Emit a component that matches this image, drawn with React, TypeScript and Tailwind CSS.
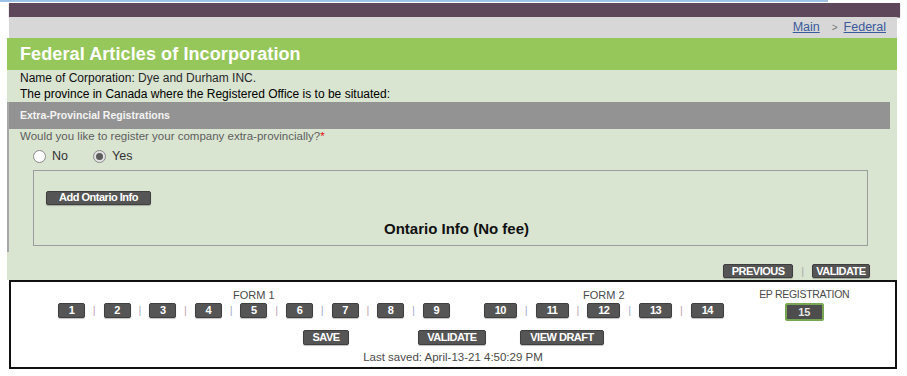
import React from 'react';

type BtnProps = {
  children: React.ReactNode;
  className?: string;
};

const Btn: React.FC<BtnProps> = ({ children, className = '' }) => (
  <span
    className={`inline-flex items-center justify-center rounded-[2px] border border-[#3f3f3f] bg-[#555555] font-bold leading-none tracking-[-0.5px] text-white shadow-[0_1px_1px_rgba(0,0,0,0.25)] ${className}`}
  >
    {children}
  </span>
);

const Sep: React.FC<{ w: string; tone: string }> = ({ w, tone }) => (
  <span className={`flex h-[15px] items-center justify-center text-[11px] leading-none ${w} ${tone}`}>|</span>
);

const form1 = ['1', '2', '3', '4', '5', '6', '7', '8', '9'];
const form2 = ['10', '11', '12', '13', '14'];

const Radio: React.FC<{ checked?: boolean }> = ({ checked }) => (
  <span
    className={`flex h-[13px] w-[13px] items-center justify-center rounded-full border border-[#8a8a8a] ${
      checked ? 'bg-[#e2e2e2]' : 'bg-white'
    }`}
  >
    {checked && <span className="h-[7px] w-[7px] rounded-full bg-[#5c5c5c]" />}
  </span>
);

export default function App() {
  return (
    <div className="relative h-[376px] w-[907px] overflow-hidden bg-white font-['Liberation_Sans',Arial,sans-serif]">
      {/* top strip */}
      <div className="h-[2px] w-[828px] bg-[#9cc3e6]" />
      <div className="h-[1px]" />
      <div className="ml-[9px] h-[14px] w-[891px] bg-[#5e465b] shadow-[0_1px_1px_rgba(0,0,0,0.4)]" />

      {/* breadcrumb */}
      <div className="ml-[9px] flex h-[21px] w-[888px] items-center justify-end bg-[#d7d7d7] pr-[11px] text-[12.5px]">
        <a className="text-[#3a5a9c] underline">Main</a>
        <span className="ml-[12px] mr-[6px] text-[10px] text-[#777]">&gt;</span>
        <a className="text-[#3a5a9c] underline">Federal</a>
      </div>

      {/* header */}
      <div className="ml-[7px] flex h-[32px] w-[890px] items-center bg-[#96c75a] pl-[13px] text-[18px] font-bold tracking-[0.1px] text-white">
        Federal Articles of Incorporation
      </div>

      {/* content panel */}
      <div className="ml-[7px] h-[210px] w-[890px] bg-[#d9e4d1]">
        <div className="pl-[13px] text-[12px] leading-[16px] text-[#111]">
          <div>Name of Corporation: <span className="text-[#2a2a2a]">Dye and Durham INC.</span></div>
          <div className="text-black">The province in Canada where the Registered Office is to be situated:</div>
        </div>

        <div className="h-[150px] border-l-2 border-[#a9a6a9]">
          <div className="flex h-[27px] w-[881px] items-center bg-[#939393] pl-[11px] text-[10.5px] font-bold text-[#f4f4f4]">
            Extra-Provincial Registrations
          </div>
          <div className="pl-[11px] text-[11.5px] leading-[14px] text-[#5e5e5e]">
            Would you like to register your company extra-provincially?<span className="text-[#e01010]">*</span>
          </div>
          <div className="flex h-[27px] items-center pl-[24px] text-[12.5px] text-[#333]">
            <Radio />
            <span className="ml-[6px]">No</span>
            <span className="ml-[25px]">
              <Radio checked />
            </span>
            <span className="ml-[6px]">Yes</span>
          </div>
          <div className="ml-[24px] h-[76px] w-[835px] border border-[#9c9c9c] pl-[12px] pt-[13px]">
            <Btn className="h-[14px] w-[105px] text-[11px]">Add Ontario Info</Btn>
            <div className="mt-[11px] text-center text-[15px] font-bold leading-[20px] text-[#111]">
              Ontario Info (No fee)
            </div>
          </div>
        </div>

        <div className="mt-[12px] flex items-center justify-end pr-[27px]">
          <Btn className="h-[14px] w-[70px] text-[11px]">PREVIOUS</Btn>
          <span className="mx-[8px] text-[11px] leading-none text-[#aaa]">|</span>
          <Btn className="h-[14px] w-[58px] text-[11px]">VALIDATE</Btn>
        </div>
      </div>

      {/* navigation box */}
      <div className="ml-[9px] h-[89px] w-[888px] border-2 border-[#111] bg-white pt-[6px]">
        <div className="flex h-[33px] items-start">
          <div className="ml-[47px] flex flex-col items-center">
            <div className="h-[15px] text-[11px] leading-[15px] text-[#4a4a4a]">FORM 1</div>
            <div className="flex">
              {form1.map((n, i) => (
                <React.Fragment key={n}>
                  {i > 0 && <Sep w="w-[18.6px]" tone={i % 2 ? 'text-[#c7a3b6]' : 'text-[#a5abc9]'} />}
                  <Btn className="h-[15px] w-[27px] text-[11px] text-[#e6e6e6]">{n}</Btn>
                </React.Fragment>
              ))}
            </div>
          </div>
          <div className="ml-[34px] flex flex-col items-center">
            <div className="h-[15px] text-[11px] leading-[15px] text-[#4a4a4a]">FORM 2</div>
            <div className="flex">
              {form2.map((n, i) => (
                <React.Fragment key={n}>
                  {i > 0 && <Sep w="w-[18.75px]" tone={i % 2 ? 'text-[#a5abc9]' : 'text-[#c7a3b6]'} />}
                  <Btn className="h-[15px] w-[33px] text-[11px] text-[#e6e6e6]">{n}</Btn>
                </React.Fragment>
              ))}
            </div>
          </div>
          <div className="ml-[20.5px] flex w-[120px] flex-col items-center">
            <div className="h-[15px] text-[10.5px] leading-[13px] tracking-[-0.3px] text-[#4a4a4a]">EP REGISTRATION</div>
            <span className="inline-flex h-[18px] w-[39px] items-center justify-center rounded-[2px] border-2 border-[#77a654] bg-[#4d4d4d] text-[11px] font-bold leading-none text-[#e6e6e6]">
              15
            </span>
          </div>
        </div>

        <div className="mt-[9px] flex">
          <Btn className="ml-[292px] h-[15px] w-[46px] text-[11px]">SAVE</Btn>
          <Btn className="ml-[69px] h-[15px] w-[68px] text-[11px]">VALIDATE</Btn>
          <Btn className="ml-[34px] h-[15px] w-[84px] text-[11px]">VIEW DRAFT</Btn>
        </div>

        <div className="mt-[5px] text-center text-[11.5px] leading-[14px] text-[#4a4a4a]">
          Last saved: April-13-21 4:50:29 PM
        </div>
      </div>
    </div>
  );
}
